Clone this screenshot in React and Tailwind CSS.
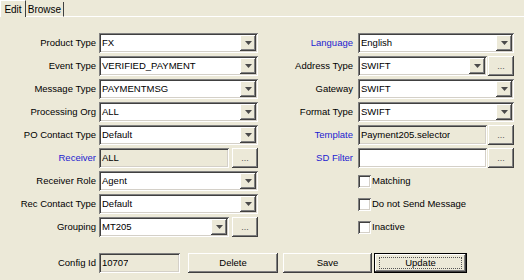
import React from 'react';

const sunken = 'shadow-[inset_1px_1px_0_#808080,inset_-1px_-1px_0_#ffffff,inset_2px_2px_0_#404040,inset_-2px_-2px_0_#d4d0c8]';
const raised = 'shadow-[inset_-1px_-1px_0_#404040,inset_1px_1px_0_#ffffff,inset_-2px_-2px_0_#808080]';

const Arrow = () => (
  <svg width="7" height="4" viewBox="0 0 7 4">
    <path d="M0 0h7L3.5 4z" fill="#4a4a4a" />
  </svg>
);

const DropButton = () => (
  <div className={`flex h-[16px] w-[16px] shrink-0 items-center justify-center bg-[#ECE9D8] ${raised}`}>
    <Arrow />
  </div>
);

const DotsButton = () => (
  <div className={`flex h-[20px] w-[26px] shrink-0 items-end justify-center pb-[5px] bg-[#ECE9D8] text-[9px] leading-none text-[#555] ${raised}`}>
    ...
  </div>
);

// classic combo box
const Combo = ({ value, width = 'w-[159px]' }) => (
  <div className={`flex h-[20px] ${width} items-center bg-white p-[2px] ${sunken}`}>
    <span className="flex-1 truncate pl-[1px]">{value}</span>
    <DropButton />
  </div>
);

const TextField = ({ value, width, grey }) => (
  <div className={`flex h-[20px] ${width} items-center p-[2px] ${grey ? 'bg-[#ECE9D8]' : 'bg-white'} ${sunken}`}>
    <span className="truncate pl-[1px]">{value}</span>
  </div>
);

const WithDots = ({ children }) => (
  <div className="flex w-[159px] justify-between">
    {children}
    <DotsButton />
  </div>
);

const Check = ({ label }) => (
  <div className="flex items-center">
    <div className={`h-[13px] w-[13px] bg-white ${sunken}`} />
    <span className="ml-[1px]">{label}</span>
  </div>
);

const Label = ({ children, blue, right }) => (
  <div className={`flex items-center justify-end ${right ? 'pr-[2px]' : ''} ${blue ? 'text-[#1c1cd0]' : 'text-black'}`}>
    {children}
  </div>
);

const Btn = ({ children, width, isDefault }) => (
  <div className={`flex h-[20px] ${width} ${isDefault ? 'border border-black' : ''}`}>
    <div className={`flex flex-1 items-center justify-center bg-[#ECE9D8] ${raised}`}>
      {isDefault ? (
        <div className="flex h-[12px] w-[83px] items-center justify-center border border-dotted border-[#555]">{children}</div>
      ) : (
        children
      )}
    </div>
  </div>
);

export default function App() {
  return (
    <div className="h-[280px] w-[524px] overflow-hidden bg-[#ECE9D8] text-[9.5px] text-black" style={{ fontFamily: '"Liberation Sans", Arial, sans-serif' }}>
      {/* tabs */}
      <div className="flex h-[17px] items-end">
        <div className="flex h-[17px] w-[26px] items-center justify-center border-r border-[#404040] border-l border-t border-l-white border-t-white text-[10px]">
          Edit
        </div>
        <div className="flex h-[15px] w-[38px] items-center justify-center border-b border-r border-b-white border-r-[#404040] text-[10px]">
          Browse
        </div>
        <div className="h-[1px] flex-1 bg-white" />
      </div>

      <div className="grid grid-cols-[96px_159px_94px_156px] gap-x-[3px] gap-y-[3px] pt-[16px] [grid-auto-rows:20px]">
        <Label>Product Type</Label>
        <Combo value="FX" />
        <Label blue right>Language</Label>
        <Combo value="English" width="w-[156px]" />

        <Label>Event Type</Label>
        <Combo value="VERIFIED_PAYMENT" />
        <Label right>Address Type</Label>
        <div className="flex justify-between">
          <Combo value="SWIFT" width="w-[129px]" />
          <DotsButton />
        </div>

        <Label>Message Type</Label>
        <Combo value="PAYMENTMSG" />
        <Label right>Gateway</Label>
        <Combo value="SWIFT" width="w-[156px]" />

        <Label>Processing Org</Label>
        <Combo value="ALL" />
        <Label right>Format Type</Label>
        <Combo value="SWIFT" width="w-[156px]" />

        <Label>PO Contact Type</Label>
        <Combo value="Default" />
        <Label blue right>Template</Label>
        <div className="flex justify-between">
          <TextField value="Payment205.selector" width="w-[129px]" grey />
          <DotsButton />
        </div>

        <Label blue>Receiver</Label>
        <WithDots>
          <TextField value="ALL" width="w-[130px]" grey />
        </WithDots>
        <Label blue right>SD Filter</Label>
        <div className="flex justify-between">
          <TextField value="" width="w-[129px]" />
          <DotsButton />
        </div>

        <Label>Receiver Role</Label>
        <Combo value="Agent" />
        <div />
        <Check label="Matching" />

        <Label>Rec Contact Type</Label>
        <Combo value="Default" />
        <div />
        <Check label="Do not Send Message" />

        <Label>Grouping</Label>
        <WithDots>
          <Combo value="MT205" width="w-[130px]" />
        </WithDots>
        <div />
        <Check label="Inactive" />
      </div>

      <div className="mt-[16px] flex items-center">
        <div className="w-[96px] text-right">Config Id</div>
        <div className="ml-[3px]">
          <TextField value="10707" width="w-[81px]" grey />
        </div>
        <div className="ml-[8px]">
          <Btn width="w-[90px]">Delete</Btn>
        </div>
        <div className="ml-[5px]">
          <Btn width="w-[89px]">Save</Btn>
        </div>
        <div className="ml-[2px]">
          <Btn width="w-[93px]" isDefault>Update</Btn>
        </div>
      </div>
    </div>
  );
}
